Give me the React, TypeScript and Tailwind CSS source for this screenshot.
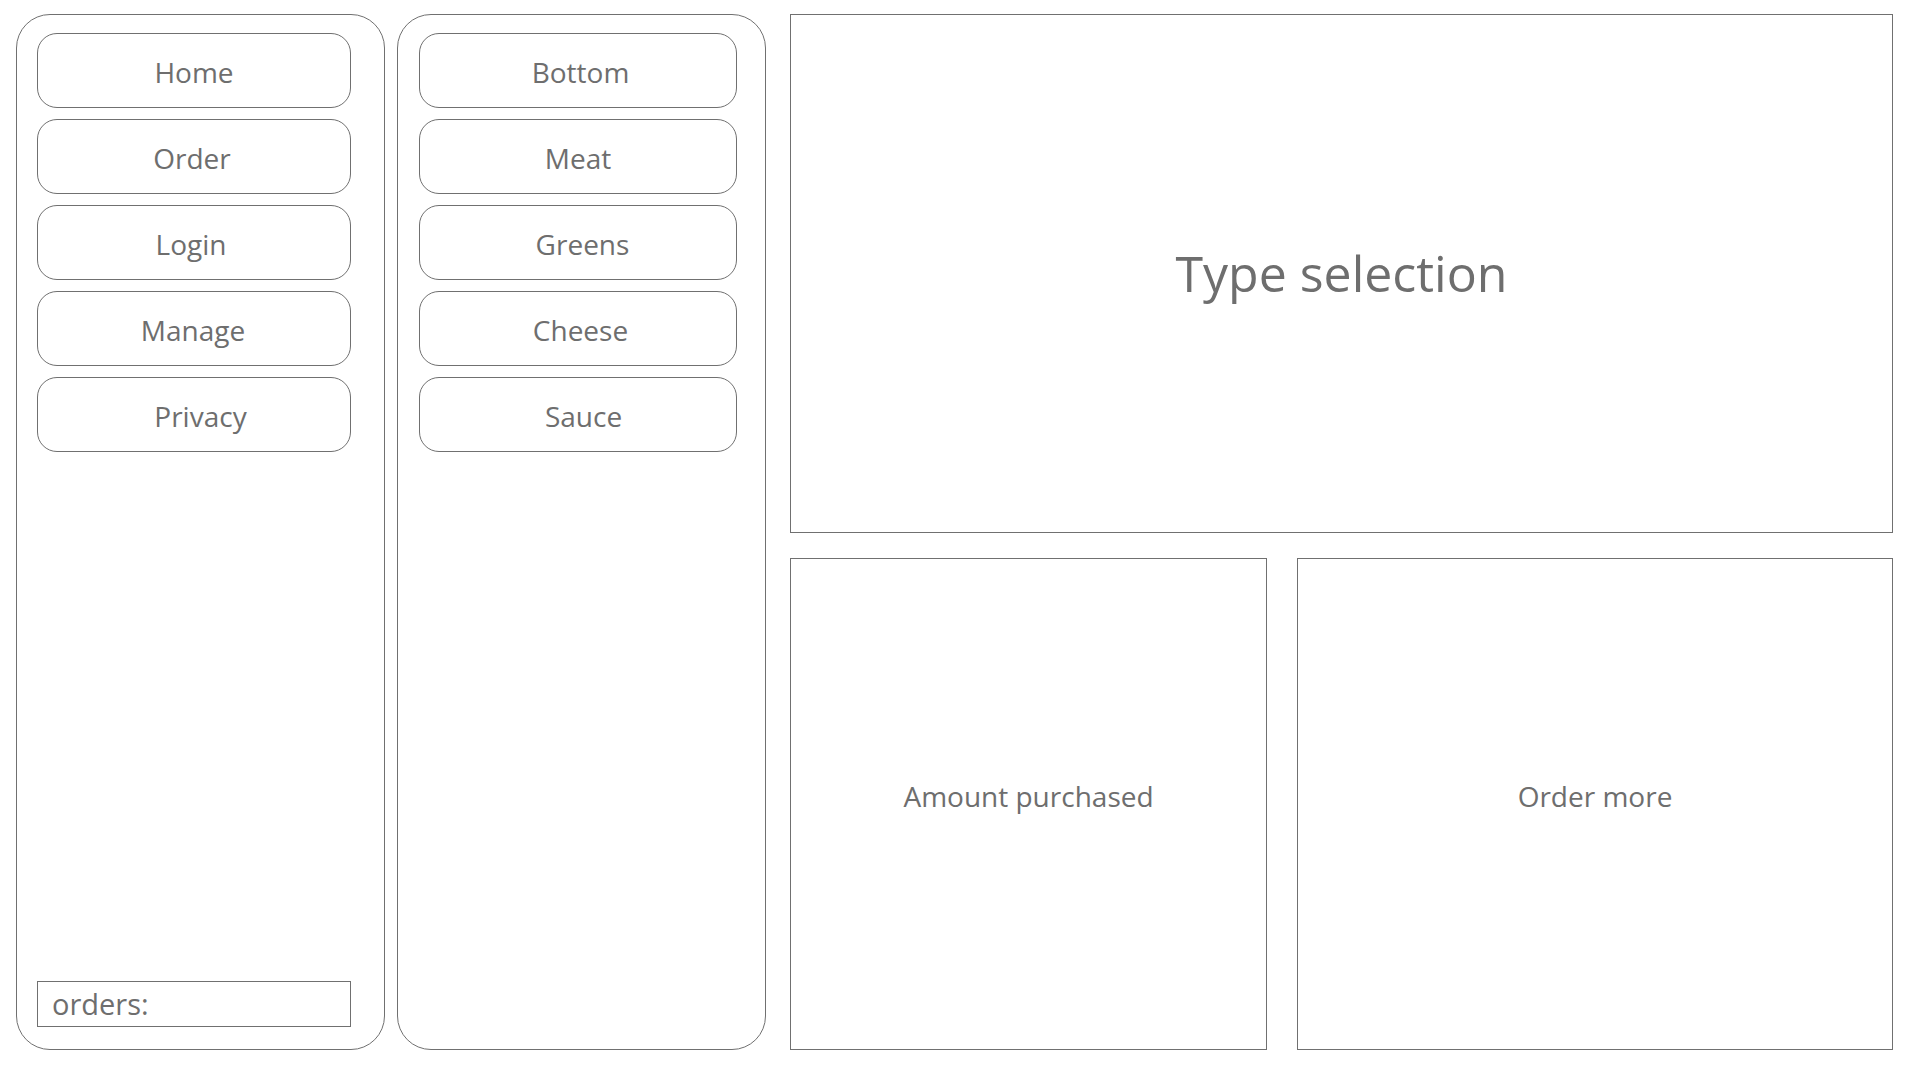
const navItems = [
  { label: 'Home', shift: '' },
  { label: 'Order', shift: 'pr-[4px]' },
  { label: 'Login', shift: 'pr-[6px]' },
  { label: 'Manage', shift: 'pr-[2px]' },
  { label: 'Privacy', shift: 'pl-[13px]' },
];
const typeItems = [
  { label: 'Bottom', shift: 'pl-[5px]' },
  { label: 'Meat', shift: '' },
  { label: 'Greens', shift: 'pl-[9px]' },
  { label: 'Cheese', shift: 'pl-[5px]' },
  { label: 'Sauce', shift: 'pl-[11px]' },
];

function PillButton({ label, width, shift }: { label: string; width: string; shift: string }) {
  return (
    <button
      className={`flex h-[75px] ${width} items-center justify-center rounded-[20px] border border-[#707070] bg-white pt-[2px] text-[28px] text-[#6e6e6e]`}
    >
      <span className={shift}>{label}</span>
    </button>
  );
}

export default function App() {
  return (
    <div className="flex min-h-screen w-full bg-white pl-[16px] pt-[14px] font-['Open_Sans',sans-serif] text-[#6e6e6e]">
      {/* main nav */}
      <div className="flex h-[1036px] w-[369px] flex-col rounded-[34px] border border-[#707070] pl-[20px] pt-[18px] pb-[22px]">
        <div className="flex flex-col gap-[11px]">
          {navItems.map((item) => (
            <PillButton key={item.label} label={item.label} shift={item.shift} width="w-[314px]" />
          ))}
        </div>
        <div className="mt-auto flex h-[46px] w-[314px] items-center border border-[#707070] pl-[14px] text-[29px]">
          orders:
        </div>
      </div>

      {/* ingredient types */}
      <div className="ml-[12px] flex h-[1036px] w-[369px] flex-col rounded-[34px] border border-[#707070] pl-[21px] pt-[18px]">
        <div className="flex flex-col gap-[11px]">
          {typeItems.map((item) => (
            <PillButton key={item.label} label={item.label} shift={item.shift} width="w-[318px]" />
          ))}
        </div>
      </div>

      {/* content */}
      <div className="ml-[24px] flex w-[1103px] flex-col gap-[25px]">
        <div className="flex h-[519px] items-center justify-center border border-[#707070] text-[50px]">
          Type selection
        </div>
        <div className="flex h-[492px] gap-[30px]">
          <div className="flex w-[477px] items-center justify-center border border-[#707070] pb-[16px] text-[28px]">
            Amount purchased
          </div>
          <div className="flex w-[596px] items-center justify-center border border-[#707070] pb-[16px] text-[28px]">
            Order more
          </div>
        </div>
      </div>
    </div>
  );
}
